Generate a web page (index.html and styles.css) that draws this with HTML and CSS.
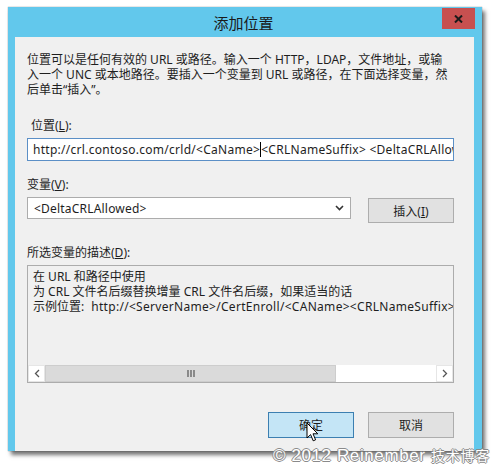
FILE: index.html
```html
<!DOCTYPE html>
<html lang="zh-CN">

<head>
    <meta charset="UTF-8">
    <meta name="viewport" content="width=device-width, initial-scale=1.0">
    <title>添加位置</title>
    <link rel="stylesheet" href="styles.css">
</head>

<body>
    <div class="stage">
        <div class="window">
            <div class="titlebar">
                <span></span>
                <h1 class="title">添加位置</h1>
                <button class="close" aria-label="关闭">
                    <svg width="9" height="8" viewBox="0 0 9 8">
                        <path d="M1 0.5 L8 7.5 M8 0.5 L1 7.5" stroke="#1a1a1a" stroke-width="2" fill="none" />
                    </svg>
                </button>
            </div>

            <div class="client">
                <p class="intro">
                    位置可以是任何有效的 URL 或路径。输入一个 HTTP，LDAP，文件地址，或输<br>
                    入一个 UNC 或本地路径。要插入一个变量到 URL 或路径，在下面选择变量，然<br>
                    后单击“插入”。
                </p>

                <div class="field-label field-label-loc">位置(<u>L</u>):</div>
                <div class="textbox">
                    <span>http://crl.contoso.com/crld/&lt;CaName&gt;</span><span class="caret"></span><span>&lt;CRLNameSuffix&gt; &lt;DeltaCRLAllowed&gt;.crl</span>
                </div>

                <div class="field-label field-label-var">变量(<u>V</u>):</div>
                <div class="combo-row">
                    <div class="combo">
                        <span>&lt;DeltaCRLAllowed&gt;</span>
                        <svg class="chevron" width="9" height="6" viewBox="0 0 9 6">
                            <path d="M1 1 L4.5 4.5 L8 1" stroke="#333" stroke-width="1.6" fill="none" />
                        </svg>
                    </div>
                    <button class="btn btn-insert">插入(<u>I</u>)</button>
                </div>

                <div class="field-label field-label-desc">所选变量的描述(<u>D</u>):</div>
                <div class="desc">
                    <div class="desc-text">
                        <div>在 URL 和路径中使用</div>
                        <div>为 CRL 文件名后缀替换增量 CRL 文件名后缀，如果适当的话</div>
                        <div>示例位置:<span class="wide">http://&lt;ServerName&gt;/CertEnroll/&lt;CAName&gt;&lt;CRLNameSuffix&gt;&lt;DeltaCRLAllowed&gt;.crl</span></div>
                    </div>
                    <div class="hscroll">
                        <div class="sb-btn">
                            <svg width="6" height="9" viewBox="0 0 6 9">
                                <path d="M5 1 L1.5 4.5 L5 8" stroke="#555" stroke-width="1.3" fill="none" />
                            </svg>
                        </div>
                        <div class="sb-thumb">
                            <svg width="8" height="7" viewBox="0 0 8 7">
                                <path d="M1 0 V7 M4 0 V7 M7 0 V7" stroke="#555" stroke-width="1.2" />
                            </svg>
                        </div>
                        <div class="sb-track"></div>
                        <div class="sb-btn">
                            <svg width="6" height="9" viewBox="0 0 6 9">
                                <path d="M1 1 L4.5 4.5 L1 8" stroke="#555" stroke-width="1.3" fill="none" />
                            </svg>
                        </div>
                    </div>
                </div>

                <div class="actions">
                    <button class="btn btn-default">确定</button>
                    <button class="btn">取消</button>
                </div>
            </div>
        </div>

        <!-- mouse pointer over the OK button -->
        <svg class="pointer" width="13" height="21" viewBox="0 0 13 21">
            <path d="M1 1 L1 16 L4.6 12.6 L7.2 18.8 L9.6 17.8 L7 11.8 L11.8 11.8 Z" fill="#fff" stroke="#000" stroke-width="1" stroke-linejoin="round" />
        </svg>

        <div class="watermark">© 2012 Reinember <span class="watermark-cjk">技术博客</span></div>
    </div>
</body>

</html>
```

FILE: styles.css
```css
body {
    margin: 0;
    background-color: #fff;
    font-family: "Noto Sans", "Noto Sans CJK SC", sans-serif;
    font-size: 12px;
    color: #1e1e1e;
}

.stage {
    position: relative;
    height: 471px;
    padding: 7px 0 0 8px;
    box-sizing: border-box;
}

.window {
    width: 474px;
    background-color: #62c8ec;
    box-shadow: 0 0 1px rgba(0, 0, 0, 0.5), 3px 4px 4px rgba(0, 0, 0, 0.55);
}

.titlebar {
    height: 30px;
    display: grid;
    grid-template-columns: 1fr auto 1fr;
}

.title {
    margin: 0 0 0 -3px;
    align-self: center;
    font-size: 15px;
    font-weight: normal;
    font-family: "Noto Sans CJK SC", sans-serif;
    color: #1a1a1a;
}

.close {
    justify-self: end;
    align-self: start;
    width: 33px;
    height: 21px;
    margin: 1px 7px 0 0;
    padding: 0;
    border: none;
    background-color: #c75050;
    display: flex;
    align-items: center;
    justify-content: center;
}

.client {
    height: 414px;
    margin: 0 8px 8px 7px;
    padding: 15px 20px 0 12px;
    box-sizing: border-box;
    background-color: #f0f0f0;
}

.intro {
    margin: 0;
    line-height: 15px;
    white-space: nowrap;
}

.field-label {
    line-height: 15px;
}

.field-label-loc {
    margin-top: 21px;
    padding-left: 4px;
}

.field-label-var {
    margin-top: 16px;
}

.field-label-desc {
    margin-top: 22px;
}

.textbox {
    margin-top: 5px;
    height: 23px;
    padding: 0 5px;
    box-sizing: border-box;
    border: 1px solid #5b8fc6;
    background-color: #fff;
    white-space: nowrap;
    overflow: hidden;
    line-height: 21px;
    letter-spacing: 0.28px;
}

.caret {
    display: inline-block;
    width: 1px;
    height: 15px;
    background-color: #000;
    vertical-align: -3px;
}

.combo-row {
    margin-top: 5px;
    display: flex;
    align-items: flex-start;
    justify-content: space-between;
}

.combo {
    width: 324px;
    height: 22px;
    padding: 0 6px;
    box-sizing: border-box;
    border: 1px solid #acacac;
    background-color: #fff;
    display: flex;
    align-items: center;
    justify-content: space-between;
    letter-spacing: 0.2px;
}

.btn {
    width: 86px;
    height: 26px;
    padding: 0;
    border: 1px solid #adadad;
    background-color: #e1e1e1;
    font-family: inherit;
    font-size: 12px;
    color: #1e1e1e;
}

.btn-insert {
    height: 25px;
    margin-top: 1px;
}

.desc {
    margin-top: 5px;
    height: 118px;
    box-sizing: border-box;
    border: 1px solid #acacac;
    display: flex;
    flex-direction: column;
}

.desc-text {
    flex: 1;
    padding: 3px 5px 0;
    line-height: 15px;
    white-space: nowrap;
    overflow: hidden;
}

.wide {
    margin-left: 7px;
    letter-spacing: 0.3px;
}

.hscroll {
    height: 17px;
    display: flex;
    background-color: #fff;
}

.sb-btn {
    width: 17px;
    display: flex;
    align-items: center;
    justify-content: center;
    border: 1px solid #e6e6e6;
    box-sizing: border-box;
}

.sb-thumb {
    width: 291px;
    background-color: #dadada;
    border: 1px solid #cdcdcd;
    box-sizing: border-box;
    display: flex;
    align-items: center;
    justify-content: center;
}

.sb-track {
    flex: 1;
}

.actions {
    margin-top: 29px;
    display: flex;
    justify-content: flex-end;
    gap: 14px;
}

.btn-default {
    background-color: #c4e5f6;
    border-color: #3c7fb1;
}

.pointer {
    position: absolute;
    left: 306px;
    top: 422px;
}

.watermark {
    position: absolute;
    left: 273px;
    top: 445px;
    font-family: "Liberation Sans", "Noto Sans CJK SC", sans-serif;
    font-size: 17px;
    letter-spacing: 0.6px;
    color: #fff;
    white-space: nowrap;
    text-shadow: 1px 0 #8a8a8a, -1px 0 #8a8a8a, 0 1px #8a8a8a, 0 -1px #8a8a8a;
}

.watermark-cjk {
    font-size: 14px;
    letter-spacing: 0.8px;
}
```
